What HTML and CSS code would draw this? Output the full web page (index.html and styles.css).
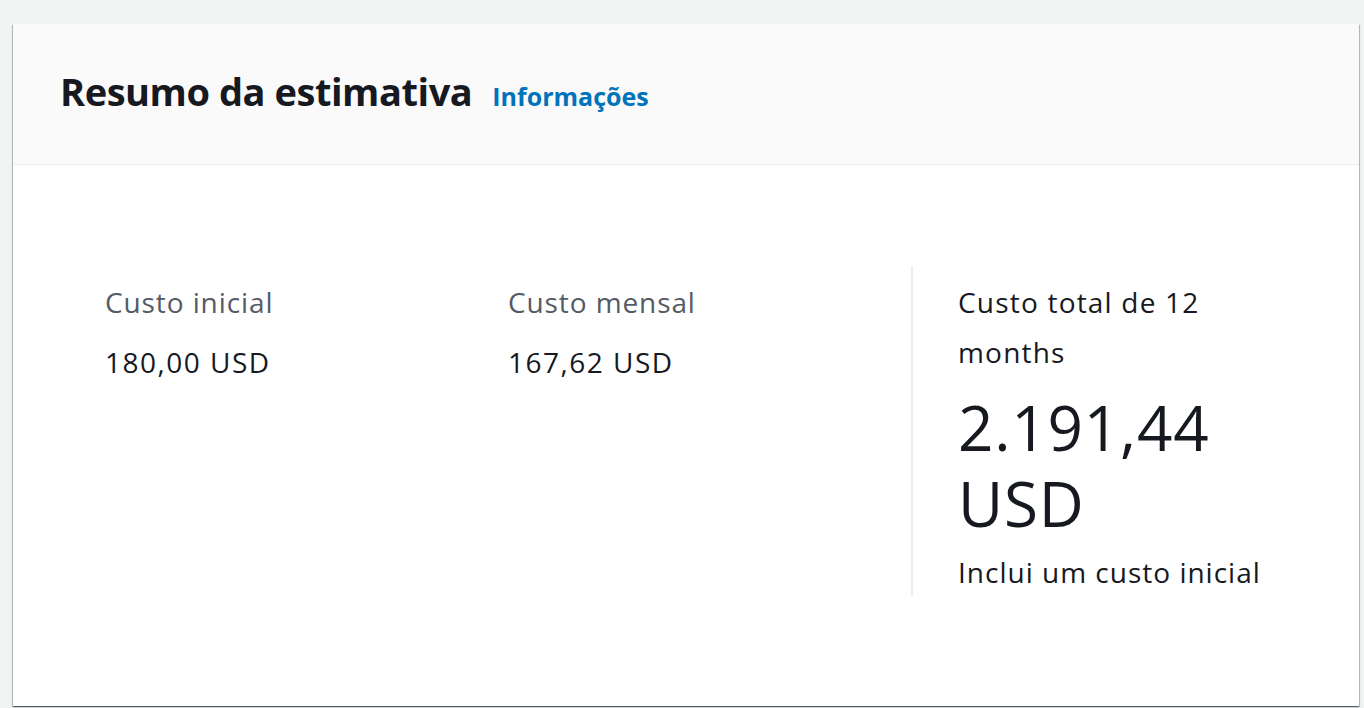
FILE: index.html
```html
<!DOCTYPE html>
<html lang="pt-BR">
<head>
<meta charset="utf-8">
<title>Resumo da estimativa</title>
<link rel="stylesheet" href="styles.css">
</head>
<body>
<section class="card">
  <header class="card-header">
    <h2 class="title">Resumo da estimativa</h2>
    <a class="info-link" href="#">Informações</a>
  </header>
  <div class="card-body">
    <div class="columns">
      <div class="col">
        <div class="label">Custo inicial</div>
        <div class="value">180,00 USD</div>
      </div>
      <div class="col">
        <div class="label">Custo mensal</div>
        <div class="value">167,62 USD</div>
      </div>
      <div class="col col-total">
        <div class="label dark">Custo total de 12 months</div>
        <div class="big">2.191,44 USD</div>
        <div class="note">Inclui um custo inicial</div>
      </div>
    </div>
  </div>
</section>
</body>
</html>
```

FILE: styles.css
```css
html, body {
  margin: 0;
  padding: 0;
}
body {
  background: #f2f3f3;
  font-family: "Open Sans", "Noto Sans", sans-serif;
  color: #16191f;
  padding: 24px 5px 0 13px;
  height: 708px;
  box-sizing: border-box;
  overflow: hidden;
}
.card {
  background: #ffffff;
  box-shadow: 0 1px 1px 0 rgba(0, 28, 36, 0.5), 1px 1px 1px 0 rgba(0, 28, 36, 0.2), -1px 1px 1px 0 rgba(0, 28, 36, 0.2);
  height: 682px;
  display: flex;
  flex-direction: column;
}
.card-header {
  background: #fafafa;
  border-bottom: 1px solid #eaeded;
  height: 141px;
  box-sizing: border-box;
  display: flex;
  align-items: baseline;
  padding: 0 47px;
  padding-top: 42px;
  gap: 20px;
}
.title {
  margin: 0;
  font-size: 38px;
  font-weight: 700;
  letter-spacing: -0.45px;
  color: #16191f;
  line-height: 50px;
}
.info-link {
  color: #0073bb;
  font-weight: 700;
  font-size: 25px;
  text-decoration: none;
  letter-spacing: 0;
}
.card-body {
  padding: 101px 0 0 92px;
}
.columns {
  display: grid;
  grid-template-columns: 403px 403px 403px;
}
.col {
  padding-top: 11px;
}
.col-total {
  border-left: 2px solid #eaeded;
  padding-left: 45px;
  padding-right: 30px;
  height: 330px;
  box-sizing: border-box;
}
.label {
  font-size: 28px;
  line-height: 50px;
  letter-spacing: 0.9px;
  color: #545b64;
}
.label.dark {
  color: #16191f;
  letter-spacing: 1.2px;
}
.value {
  font-size: 28px;
  line-height: 50px;
  letter-spacing: 1.5px;
  margin-top: 10px;
  color: #16191f;
}
.big {
  font-size: 62px;
  line-height: 76px;
  margin-top: 12px;
  letter-spacing: 0.8px;
}
.note {
  font-size: 28px;
  line-height: 50px;
  letter-spacing: 1px;
  margin-top: 6px;
}
```
